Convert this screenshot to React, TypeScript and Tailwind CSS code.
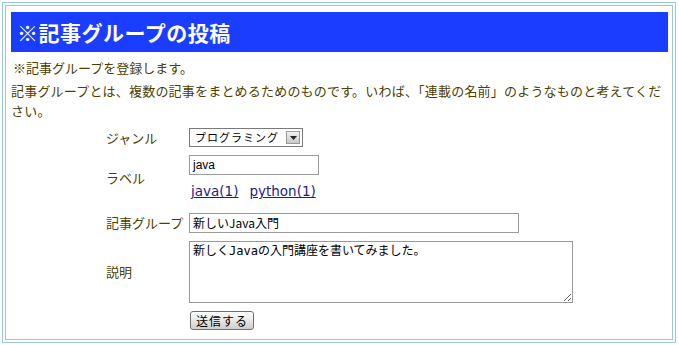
import React from "react";

const jp = { fontFamily: '"Noto Sans CJK JP", sans-serif' };

export default function App() {
  return (
    <div className="w-[679px] h-[345px] bg-white pt-[2px] pl-[2px]" style={jp}>
      {/* double border frame */}
      <div className="w-[674px] h-[341px] border border-[#96c9dc] p-[2px]">
        <div className="h-full border border-[#96c9dc] pt-[6px] pl-[5px] pr-[4px]">
          {/* Header */}
          <div className="h-[40px] bg-[#1a3dff] flex items-center pl-[6px]">
            <h1 className="text-white text-[21px] font-bold leading-none tracking-[0.5px]">
              ※記事グループの投稿
            </h1>
          </div>

          <p className="mt-[6px] pl-[2px] text-[13px] leading-[20px] text-[#4d4000]">
            ※記事グループを登録します。
          </p>
          <p className="mt-[3px] text-[13px] leading-[20px] text-[#4d4000] tracking-[0.2px]">
            記事グループとは、複数の記事をまとめるためのものです。いわば、「連載の名前」のようなものと考えてくだ
            <br />
            さい。
          </p>

          {/* Form */}
          <div className="ml-[95px] mt-[7px] flex flex-col text-[13px] text-[#4d4000]">
            {/* ジャンル */}
            <div className="flex items-center h-[19px]">
              <span className="w-[83px]">ジャンル</span>
              <div className="w-[114px] h-[19px] border border-[#7a7a7a] bg-white flex items-center justify-between pl-[5px] pr-[2px]">
                <span className="text-[11px] text-black tracking-[1px]">プログラミング</span>
                <span className="w-[14px] h-[13px] bg-gradient-to-b from-[#f0f0f0] to-[#c8c8c8] border border-[#9a9a9a] flex items-center justify-center">
                  <svg width="7" height="4" viewBox="0 0 7 4">
                    <path d="M0 0h7L3.5 4z" fill="#222" />
                  </svg>
                </span>
              </div>
            </div>

            {/* ラベル */}
            <div className="flex items-center mt-[8px]">
              <span className="w-[83px]">ラベル</span>
              <div className="flex flex-col">
                <div className="w-[130px] h-[20px] border border-[#9a9a9a] bg-white flex items-center pl-[3px]">
                  <span className="text-[12px] text-black" style={{ fontFamily: '"Liberation Sans", sans-serif' }}>
                    java
                  </span>
                </div>
                <div
                  className="mt-[7px] h-[19px] flex items-center gap-[11px] pl-[2px] text-[13.5px] text-[#1c1c8c]"
                  style={{ fontFamily: '"DejaVu Sans", sans-serif' }}
                >
                  <a href="#" className="underline">java(1)</a>
                  <a href="#" className="underline">python(1)</a>
                </div>
              </div>
            </div>

            {/* 記事グループ */}
            <div className="flex items-center mt-[12px]">
              <span className="w-[83px] whitespace-nowrap">記事グループ</span>
              <div className="w-[330px] h-[20px] border border-[#9a9a9a] bg-white flex items-center pl-[3px]">
                <span className="text-[12px] text-black">新しいJava入門</span>
              </div>
            </div>

            {/* 説明 */}
            <div className="flex items-center mt-[8px]">
              <span className="w-[83px]">説明</span>
              <textarea
                readOnly
                defaultValue="新しくJavaの入門講座を書いてみました。"
                className="w-[384px] h-[62px] border border-[#9a9a9a] bg-white px-[3px] py-[2px] text-[12px] leading-[15px] text-black outline-none resize"
                style={{ fontFamily: '"DejaVu Sans Mono", "Noto Sans CJK JP", monospace' }}
              />
            </div>

            {/* 送信 */}
            <div className="flex items-center mt-[8px]">
              <span className="w-[83px]" />
              <button className="ml-[1px] w-[64px] h-[19px] rounded-[3px] border border-[#6f6f6f] bg-gradient-to-b from-[#ffffff] to-[#cfcfcf] text-[12px] leading-none text-black tracking-[1px]">
                送信する
              </button>
            </div>
          </div>
        </div>
      </div>
    </div>
  );
}
